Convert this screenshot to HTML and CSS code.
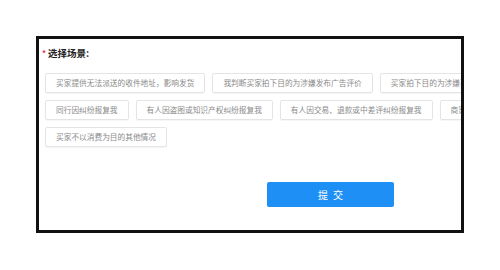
FILE: index.html
```html
<!DOCTYPE html>
<html lang="zh-CN">
<head>
    <meta charset="UTF-8">
    <meta name="viewport" content="width=device-width, initial-scale=1.0">
    <title>选择场景</title>
    <link rel="stylesheet" href="styles.css">
</head>
<body>
    <div class="frame">
        <div class="title"><span class="star">*</span>选择场景:</div>

        <div class="scene-row">
            <span class="chip">买家提供无法派送的收件地址，影响发货</span>
            <span class="chip">我判断买家拍下目的为涉嫌发布广告评价</span>
            <span class="chip">买家拍下目的为涉嫌不正当竞争</span>
        </div>
        <div class="scene-row">
            <span class="chip">同行因纠纷报复我</span>
            <span class="chip">有人因盗图或知识产权纠纷报复我</span>
            <span class="chip">有人因交易、退款或中差评纠纷报复我</span>
            <span class="chip">商家因其他原因报复我</span>
        </div>
        <div class="scene-row">
            <span class="chip">买家不以消费为目的其他情况</span>
        </div>

        <div class="button-container">
            <button class="submit">提交</button>
        </div>
    </div>
</body>
</html>
```

FILE: styles.css
```css
body {
    margin: 0;
    background-color: #fff;
    font-family: "Noto Sans CJK SC", "Noto Sans", sans-serif;
}

.frame {
    margin: 36px 0 0 36px;
    width: 422px;
    height: 191px;
    border: 3px solid #111;
    overflow: hidden;
    box-sizing: content-box;
}

.title {
    padding: 7px 0 0 3px;
    height: 14px;
    line-height: 14px;
    font-size: 9.5px;
    font-weight: bold;
    color: #222;
    margin-bottom: 13px;
}

.star {
    color: #d9304f;
    font-size: 8px;
    margin-right: 2px;
    vertical-align: top;
}

.scene-row {
    display: flex;
    flex-wrap: nowrap;
    gap: 7px;
    padding-left: 6px;
    margin-bottom: 7px;
}

.chip {
    flex-shrink: 0;
    height: 18px;
    line-height: 18px;
    padding: 0 10px;
    border: 1px solid #e4e4e4;
    border-radius: 2px;
    box-shadow: 0 1px 1px rgba(0, 0, 0, 0.04);
    font-size: 7.7px;
    color: #8a8a8a;
    white-space: nowrap;
}

.button-container {
    padding: 26px 0 0 228px;
}

.submit {
    width: 127px;
    height: 25px;
    border: none;
    border-radius: 2px;
    background-color: #1e8ff4;
    color: #fff;
    font-family: "Noto Sans CJK SC", sans-serif;
    font-size: 10px;
    letter-spacing: 5px;
    padding: 0 0 0 5px;
}
```
